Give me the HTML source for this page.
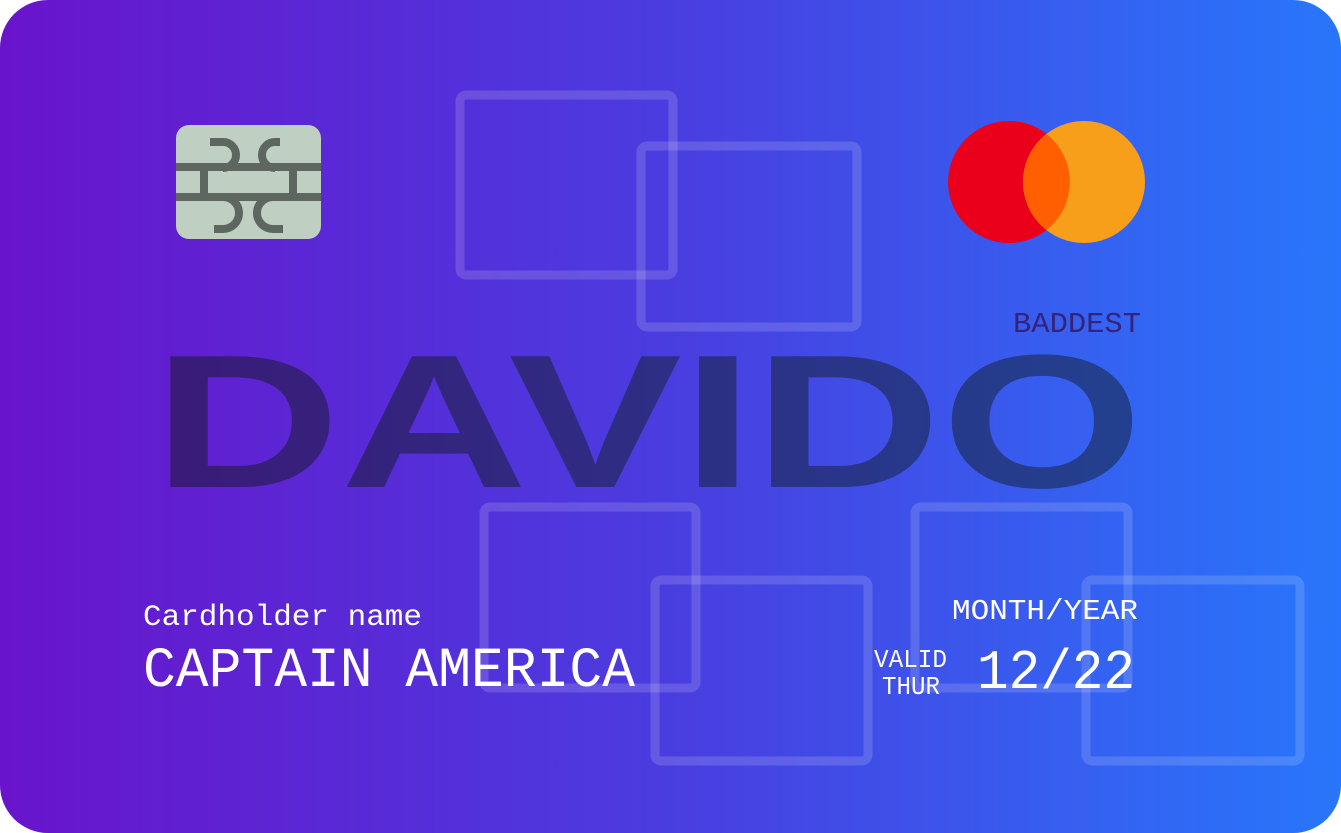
<!DOCTYPE html>
<html><head><meta charset="utf-8"><style>
html,body{margin:0;padding:0;background:#fff;}
svg{display:block}
</style></head><body>
<svg width="1341" height="833" viewBox="0 0 1341 833" xmlns="http://www.w3.org/2000/svg">
<defs>
<linearGradient id="bg" x1="0" y1="0" x2="1" y2="0">
<stop offset="0" stop-color="#6914cc"/>
<stop offset="0.5" stop-color="#4a3de0"/>
<stop offset="1" stop-color="#2876fb"/>
</linearGradient>
<linearGradient id="lg" x1="0" y1="0" x2="1" y2="0">
<stop offset="0" stop-color="#3a1a78"/>
<stop offset="1" stop-color="#22418f"/>
</linearGradient>
</defs>
<rect x="0" y="0" width="1341" height="833" rx="48" fill="url(#bg)"/>
<g fill="none" stroke="rgba(255,255,255,0.15)" stroke-width="9">
<rect x="460" y="95" width="213" height="180" rx="6"/>
<rect x="641" y="146" width="216" height="181" rx="6"/>
<rect x="484" y="507" width="212" height="181" rx="6"/>
<rect x="655" y="580" width="213" height="181" rx="6"/>
<rect x="915" y="507" width="213" height="181" rx="6"/>
<rect x="1086" y="580" width="214" height="181" rx="6"/>
</g>
<rect x="176" y="125" width="145" height="114" rx="13" fill="#bfcfc2"/>
<g fill="none" stroke="#5e6660" stroke-width="8">
<path d="M176 167H321M176 197H321"/>
<path d="M204 167V197M293 167V197"/>
<path d="M210 142H223a13 13 0 0 1 0 26"/>
<path d="M223 197a16 16 0 0 1 0 32H214"/>
<path d="M280 142H275a13 13 0 0 0 0 26"/>
<path d="M273 197a16 16 0 0 0 0 32H283"/>
</g>
<circle cx="1009" cy="182" r="61" fill="#eb001b"/>
<circle cx="1084" cy="182" r="61" fill="#f79e1b"/>
<path d="M1046.5 134a61 61 0 0 1 0 96a61 61 0 0 1 0-96z" fill="#ff5f00"/>
<text x="1013" y="332" font-family="Liberation Mono" font-size="29" fill="#33237a" textLength="128" lengthAdjust="spacingAndGlyphs">BADDEST</text>
<text x="153" y="487" font-family="Liberation Sans Narrow, Liberation Sans" font-weight="bold" font-size="190" fill="url(#lg)" textLength="990" lengthAdjust="spacingAndGlyphs">DAVIDO</text>
<g font-family="Liberation Mono" fill="#fff">
<text x="143" y="625" font-size="30" textLength="279" lengthAdjust="spacingAndGlyphs">Cardholder name</text>
<text x="143" y="686" font-size="57" textLength="492" lengthAdjust="spacingAndGlyphs">CAPTAIN AMERICA</text>
<text x="952" y="619" font-size="29" textLength="186" lengthAdjust="spacingAndGlyphs">MONTH/YEAR</text>
<text x="874" y="667" font-size="26" textLength="73" lengthAdjust="spacingAndGlyphs">VALID</text>
<text x="882" y="694" font-size="26" textLength="58" lengthAdjust="spacingAndGlyphs">THUR</text>
<text x="977" y="688" font-size="56" textLength="158" lengthAdjust="spacingAndGlyphs">12/22</text>
</g>
</svg>
</body></html>
